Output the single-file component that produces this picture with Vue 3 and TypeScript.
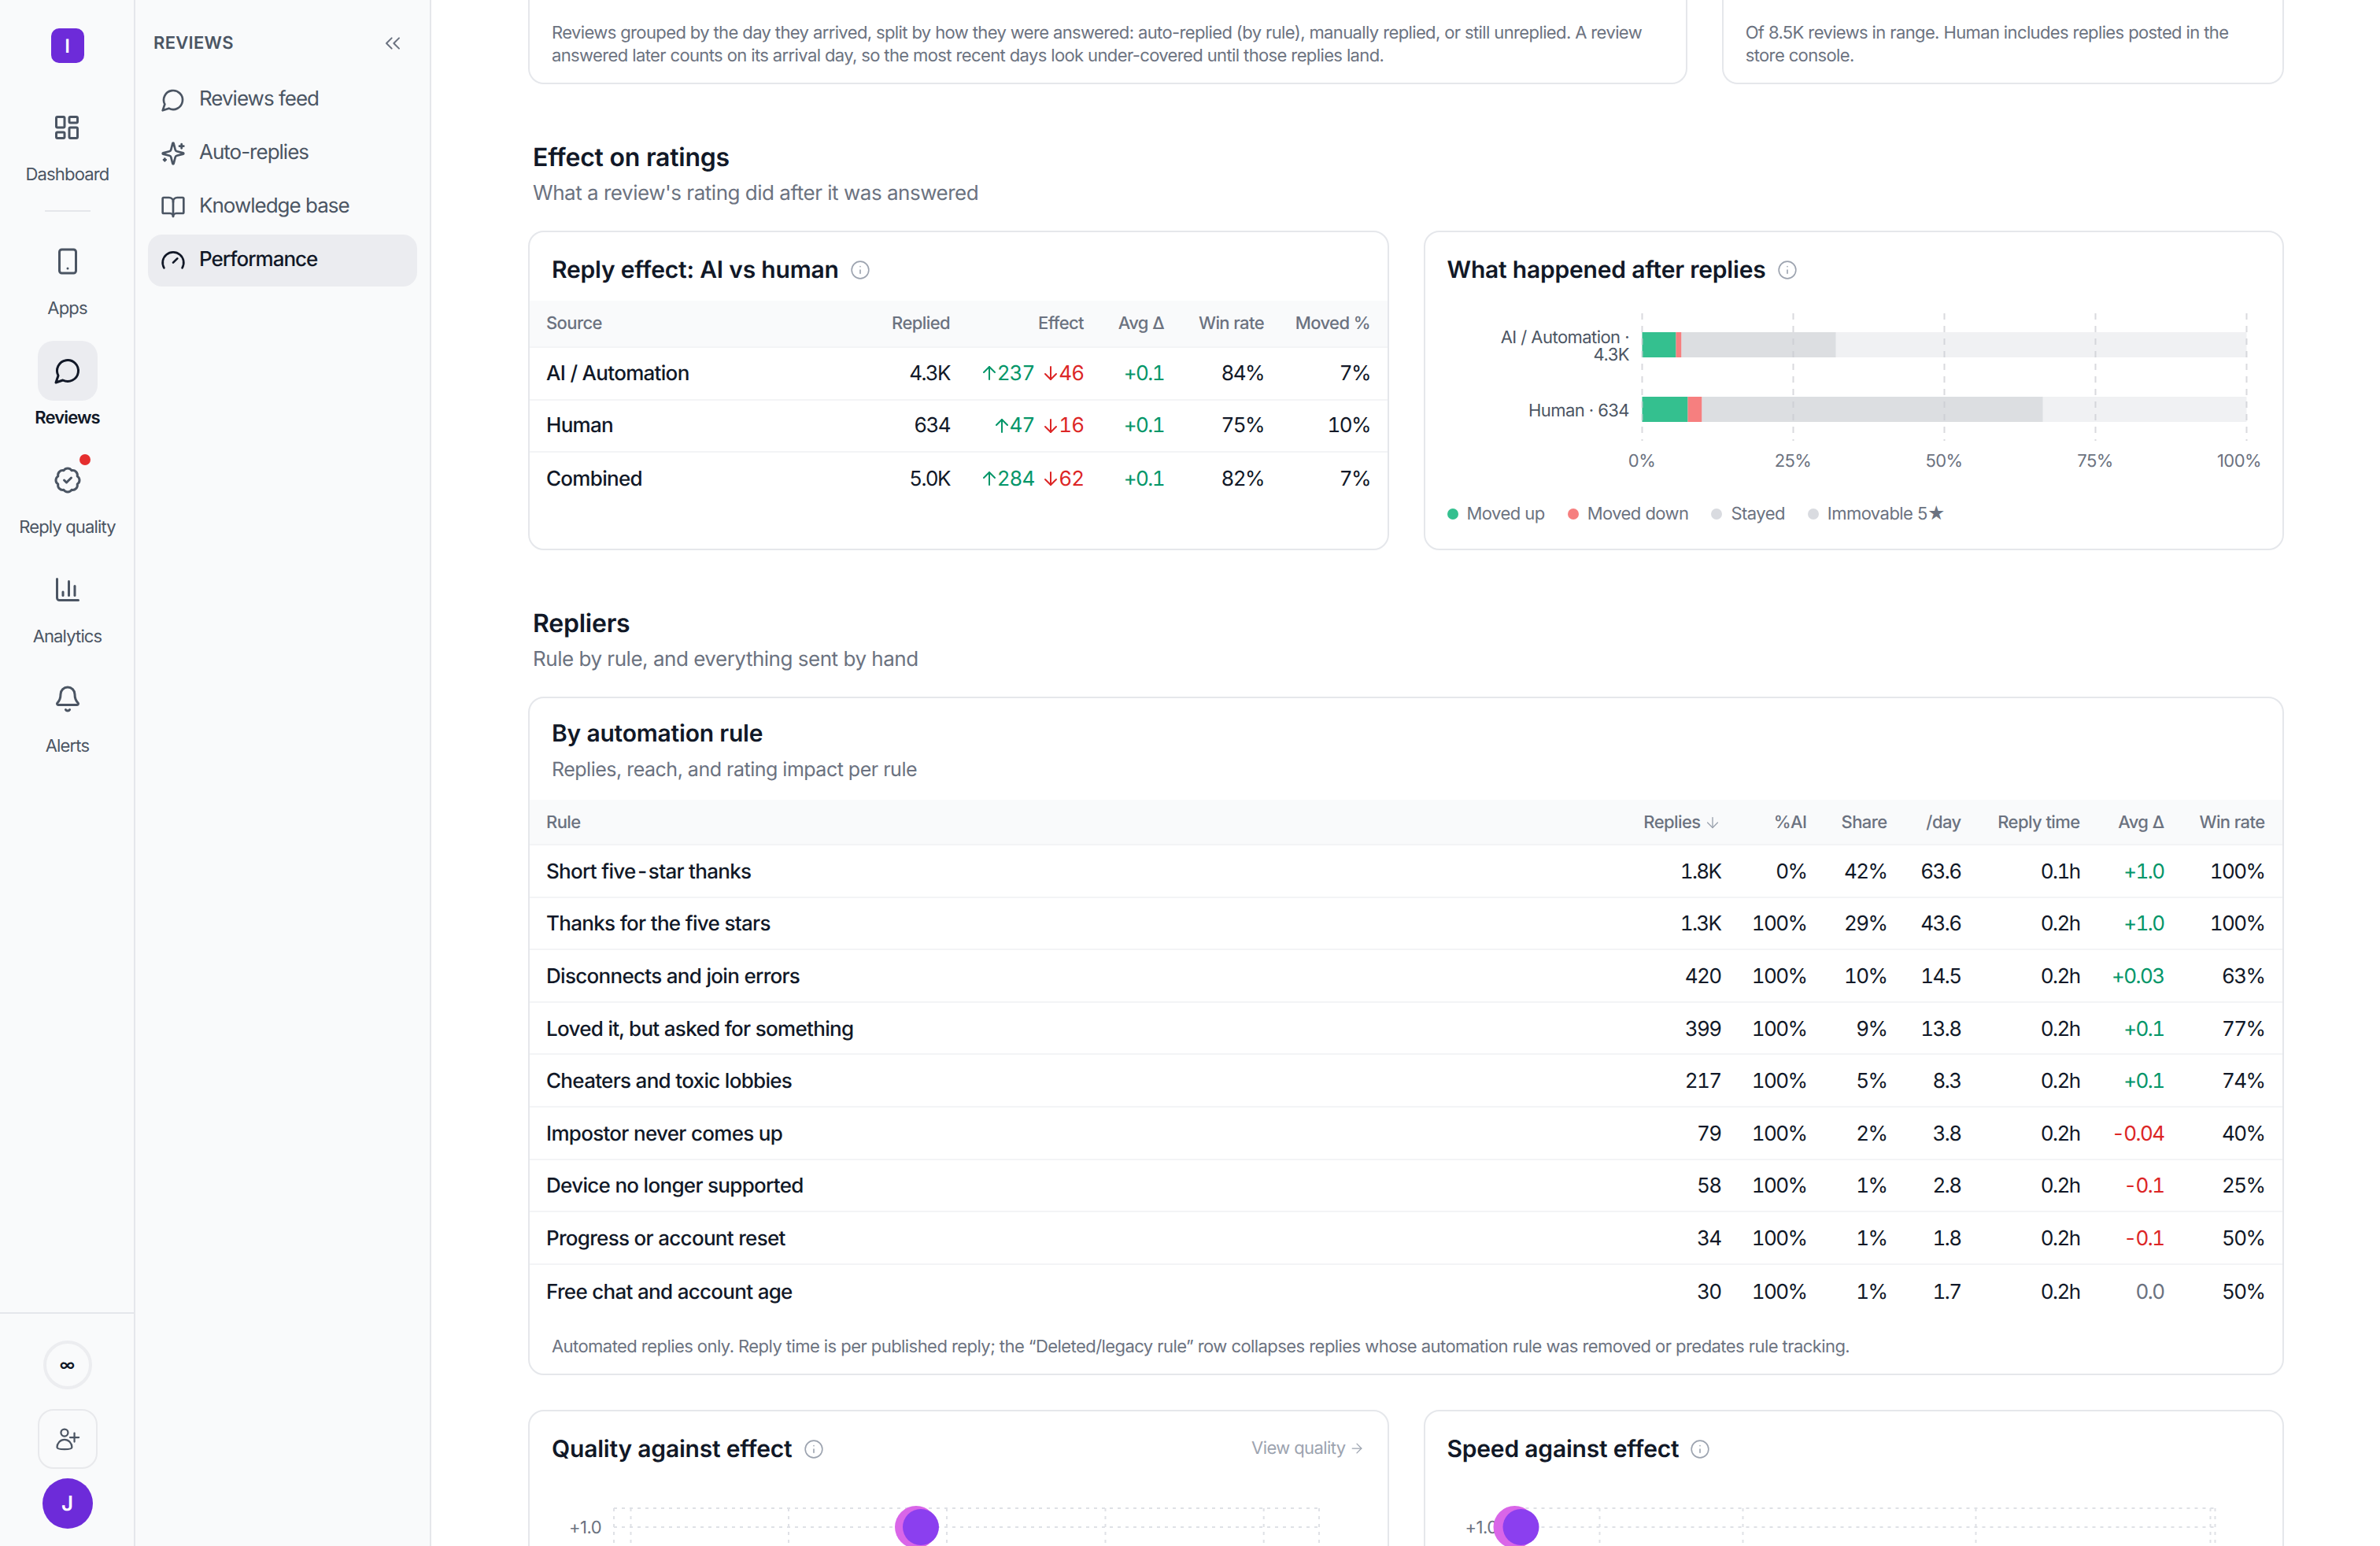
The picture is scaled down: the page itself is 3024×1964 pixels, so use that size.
<script setup lang="ts">
type RailItem = { label: string; icon: string[]; active?: boolean; dot?: boolean };

const i = {
  dashboard: [
    'M4 3h5a1 1 0 0 1 1 1v7a1 1 0 0 1-1 1H4a1 1 0 0 1-1-1V4a1 1 0 0 1 1-1z',
    'M15 3h5a1 1 0 0 1 1 1v3a1 1 0 0 1-1 1h-5a1 1 0 0 1-1-1V4a1 1 0 0 1 1-1z',
    'M15 12h5a1 1 0 0 1 1 1v7a1 1 0 0 1-1 1h-5a1 1 0 0 1-1-1v-7a1 1 0 0 1 1-1z',
    'M4 16h5a1 1 0 0 1 1 1v3a1 1 0 0 1-1 1H4a1 1 0 0 1-1-1v-3a1 1 0 0 1 1-1z',
  ],
  phone: ['M7 2h10a2 2 0 0 1 2 2v16a2 2 0 0 1-2 2H7a2 2 0 0 1-2-2V4a2 2 0 0 1 2-2z', 'M12 18h.01'],
  message: ['M7.9 20A9 9 0 1 0 4 16.1L2 22Z'],
  badge: [
    'M3.85 8.62a4 4 0 0 1 4.78-4.77 4 4 0 0 1 6.74 0 4 4 0 0 1 4.78 4.78 4 4 0 0 1 0 6.74 4 4 0 0 1-4.77 4.78 4 4 0 0 1-6.75 0 4 4 0 0 1-4.78-4.77 4 4 0 0 1 0-6.76Z',
    'm9 12 2 2 4-4',
  ],
  chart: ['M3 3v16a2 2 0 0 0 2 2h16', 'M18 17V9', 'M13 17V5', 'M8 17v-3'],
  bell: [
    'M10.268 21a2 2 0 0 0 3.464 0',
    'M3.262 15.326A1 1 0 0 0 4 17h16a1 1 0 0 0 .74-1.673C19.41 13.956 18 12.499 18 8A6 6 0 0 0 6 8c0 4.499-1.411 5.956-2.738 7.326',
  ],
  sparkles: [
    'M9.937 15.5A2 2 0 0 0 8.5 14.063l-6.135-1.582a.5.5 0 0 1 0-.962L8.5 9.936A2 2 0 0 0 9.937 8.5l1.582-6.135a.5.5 0 0 1 .963 0L14.063 8.5A2 2 0 0 0 15.5 9.937l6.135 1.581a.5.5 0 0 1 0 .964L15.5 14.063a2 2 0 0 0-1.437 1.437l-1.582 6.135a.5.5 0 0 1-.963 0z',
    'M20 3v4',
    'M22 5h-4',
    'M4 17v2',
    'M5 18H3',
  ],
  book: [
    'M12 7v14',
    'M3 18a1 1 0 0 1-1-1V4a1 1 0 0 1 1-1h5a4 4 0 0 1 4 4 4 4 0 0 1 4-4h5a1 1 0 0 1 1 1v13a1 1 0 0 1-1 1h-6a3 3 0 0 0-3 3 3 3 0 0 0-3-3z',
  ],
  gauge: ['m12 14 4-4', 'M3.34 19a10 10 0 1 1 17.32 0'],
  userPlus: [
    'M9.3 3.700a3 3 0 1 1 0 6 3 3 0 0 1 0-6z',
    'M3 19c0-3.500 2.800-6.500 6.300-6.500s6.300 3 6.300 6.500c0 1.200-2.800 1.800-6.300 1.800S3 20.200 3 19z',
    'M17.700 7v7.400',
    'M14 10.700h7.400',
  ],
  info: ['M12 2a10 10 0 1 1 0 20 10 10 0 0 1 0-20z', 'M12 16v-4', 'M12 8h.01'],
}

const rail: RailItem[] = [
  { label: 'Dashboard', icon: i.dashboard },
  { label: 'Apps', icon: i.phone },
  { label: 'Reviews', icon: i.message, active: true },
  { label: 'Reply quality', icon: i.badge, dot: true },
  { label: 'Analytics', icon: i.chart },
  { label: 'Alerts', icon: i.bell },
]

const nav = [
  { label: 'Reviews feed', icon: i.message },
  { label: 'Auto-replies', icon: i.sparkles },
  { label: 'Knowledge base', icon: i.book },
  { label: 'Performance', icon: i.gauge, active: true },
]

const sources = [
  { name: 'AI / Automation', replied: '4.3K', up: 237, down: 46, avg: '+0.1', win: '84%', moved: '7%' },
  { name: 'Human', replied: '634', up: 47, down: 16, avg: '+0.1', win: '75%', moved: '10%' },
  { name: 'Combined', replied: '5.0K', up: 284, down: 62, avg: '+0.1', win: '82%', moved: '7%' },
]

const rules = [
  ['Short five-star thanks', '1.8K', '0%', '42%', '63.6', '0.1h', '+1.0', '100%'],
  ['Thanks for the five stars', '1.3K', '100%', '29%', '43.6', '0.2h', '+1.0', '100%'],
  ['Disconnects and join errors', '420', '100%', '10%', '14.5', '0.2h', '+0.03', '63%'],
  ['Loved it, but asked for something', '399', '100%', '9%', '13.8', '0.2h', '+0.1', '77%'],
  ['Cheaters and toxic lobbies', '217', '100%', '5%', '8.3', '0.2h', '+0.1', '74%'],
  ['Impostor never comes up', '79', '100%', '2%', '3.8', '0.2h', '-0.04', '40%'],
  ['Device no longer supported', '58', '100%', '1%', '2.8', '0.2h', '-0.1', '25%'],
  ['Progress or account reset', '34', '100%', '1%', '1.8', '0.2h', '-0.1', '50%'],
  ['Free chat and account age', '30', '100%', '1%', '1.7', '0.2h', '0.0', '50%'],
]

const ruleHeads = ['%AI', 'Share', '/day', 'Reply time', 'Avg Δ', 'Win rate']

const bars = [
  { y: 40, up: 43, down: 7, stayed: 196 },
  { y: 122, up: 58, down: 18, stayed: 433 },
]
const barGrid = [275.5, 467.5, 659.5, 851.5, 1043.5]
const barTicks = [
  { x: 275, t: '0%' },
  { x: 467, t: '25%' },
  { x: 659, t: '50%' },
  { x: 851, t: '75%' },
  { x: 1034, t: '100%' },
]
const legend = [
  { label: 'Moved up', color: '#34c08f' },
  { label: 'Moved down', color: '#f67f7f' },
  { label: 'Stayed', color: '#d9dbe0' },
  { label: 'Immovable 5★', color: '#d9dbe0' },
]

const scatters = [
  { title: 'Quality against effect', link: true, grid: [107, 128.5, 329, 530, 731.5, 932.7, 1003], pink: 491, purple: 497 },
  { title: 'Speed against effect', link: false, grid: [107.5, 221.5, 403.5, 699.5, 997.5, 1003.5], pink: 113.5, purple: 121.5 },
]

function tone(v: string) {
  if (v.startsWith('+')) return 'pos'
  if (v.startsWith('-')) return 'neg'
  return 'flat'
}
</script>

<template>
  <div class="app">
    <aside class="rail">
      <div class="logo">I</div>
      <div class="rail-list">
        <template v-for="(item, n) in rail" :key="item.label">
          <div class="rail-item" :class="{ active: item.active }">
            <div class="tile">
              <svg class="ic36" viewBox="0 0 24 24"><path v-for="d in item.icon" :key="d" :d="d" /></svg>
              <span v-if="item.dot" class="dot"></span>
            </div>
            <div class="rail-label">{{ item.label }}</div>
          </div>
          <div v-if="n === 0" class="rail-sep"></div>
        </template>
      </div>
      <div class="rail-foot">
        <div class="credits">∞</div>
        <div class="invite">
          <svg class="ic36 thin" viewBox="0 0 24 24"><path v-for="d in i.userPlus" :key="d" :d="d" /></svg>
        </div>
        <div class="avatar">J</div>
      </div>
    </aside>

    <nav class="side">
      <div class="side-head">
        <span>REVIEWS</span>
        <svg class="collapse" viewBox="0 0 24 24"><path d="m11 17-5-5 5-5" /><path d="m18 17-5-5 5-5" /></svg>
      </div>
      <div class="side-list">
        <div v-for="item in nav" :key="item.label" class="side-item" :class="{ active: item.active }">
          <svg class="ic32" viewBox="0 0 24 24"><path v-for="d in item.icon" :key="d" :d="d" /></svg>
          <span>{{ item.label }}</span>
        </div>
      </div>
    </nav>

    <main class="main">
      <div class="top-row">
        <div class="card cut wide">
          Reviews grouped by the day they arrived, split by how they were answered: auto-replied (by rule), manually replied, or still unreplied. A review answered later counts on its arrival day, so the most recent days look under-covered until those replies land.
        </div>
        <div class="card cut">
          Of 8.5K reviews in range. Human includes replies posted in the store console.
        </div>
      </div>

      <section class="section">
        <h2>Effect on ratings</h2>
        <p>What a review's rating did after it was answered</p>
      </section>
      <div class="two">
        <div class="card">
          <div class="card-head">
            <h3>Reply effect: AI vs human</h3>
            <svg class="info" viewBox="0 0 24 24"><path v-for="d in i.info" :key="d" :d="d" /></svg>
          </div>
          <div class="row src head">
            <span>Source</span><span>Replied</span><span>Effect</span><span>Avg Δ</span><span>Win rate</span><span>Moved %</span>
          </div>
          <div v-for="s in sources" :key="s.name" class="row src">
            <span class="name">{{ s.name }}</span>
            <span>{{ s.replied }}</span>
            <span class="effect">
              <span class="pos"><svg class="arrow" viewBox="0 0 24 24"><path d="M12 20V4" /><path d="m5 11 7-7 7 7" /></svg>{{ s.up }}</span>
              <span class="neg"><svg class="arrow" viewBox="0 0 24 24"><path d="M12 4v16" /><path d="m19 13-7 7-7-7" /></svg>{{ s.down }}</span>
            </span>
            <span class="pos">{{ s.avg }}</span>
            <span>{{ s.win }}</span>
            <span>{{ s.moved }}</span>
          </div>
        </div>

        <div class="card">
          <div class="card-head">
            <h3>What happened after replies</h3>
            <svg class="info" viewBox="0 0 24 24"><path v-for="d in i.info" :key="d" :d="d" /></svg>
          </div>
          <svg class="chart" width="1090" height="226" viewBox="0 0 1090 226">
            <g v-for="b in bars" :key="b.y">
              <rect x="275.5" :y="b.y" width="768" height="32" fill="#f0f1f3" />
              <rect x="275.5" :y="b.y" :width="b.up" height="32" fill="#34c08f" />
              <rect :x="275.5 + b.up" :y="b.y" :width="b.down" height="32" fill="#f67f7f" />
              <rect :x="275.5 + b.up + b.down" :y="b.y" :width="b.stayed" height="32" fill="#dcdee1" />
            </g>
            <line v-for="x in barGrid" :key="x" :x1="x" :x2="x" y1="16" y2="178" class="bar-grid" />
            <text x="259" y="54" text-anchor="end" class="bar-label">AI / Automation ·</text>
            <text x="259" y="76" text-anchor="end" class="bar-label">4.3K</text>
            <text x="259" y="147" text-anchor="end" class="bar-label">Human · 634</text>
            <text v-for="t in barTicks" :key="t.t" :x="t.x" y="211" text-anchor="middle" class="tick">{{ t.t }}</text>
          </svg>
          <div class="legend">
            <span v-for="l in legend" :key="l.label" class="legend-item">
              <i :style="{ background: l.color }"></i>{{ l.label }}
            </span>
          </div>
        </div>
      </div>

      <section class="section">
        <h2>Repliers</h2>
        <p>Rule by rule, and everything sent by hand</p>
      </section>
      <div class="card rules">
        <div class="rules-head">
          <h3>By automation rule</h3>
          <p>Replies, reach, and rating impact per rule</p>
        </div>
        <div class="row rule head">
          <span>Rule</span>
          <span class="sorted">Replies<svg class="sort" viewBox="0 0 24 24"><path d="M12 5v14" /><path d="m19 12-7 7-7-7" /></svg></span>
          <span v-for="h in ruleHeads" :key="h">{{ h }}</span>
        </div>
        <div v-for="r in rules" :key="r[0]" class="row rule">
          <span class="name">{{ r[0] }}</span>
          <span>{{ r[1] }}</span>
          <span>{{ r[2] }}</span>
          <span>{{ r[3] }}</span>
          <span>{{ r[4] }}</span>
          <span>{{ r[5] }}</span>
          <span :class="tone(r[6])">{{ r[6] }}</span>
          <span>{{ r[7] }}</span>
        </div>
        <div class="foot-note">
          Automated replies only. Reply time is per published reply; the “Deleted/legacy rule” row collapses replies whose automation rule was removed or predates rule tracking.
        </div>
      </div>

      <div class="two scatter-row">
        <div v-for="c in scatters" :key="c.title" class="card">
          <div class="card-head">
            <h3>{{ c.title }}</h3>
            <svg class="info" viewBox="0 0 24 24"><path v-for="d in i.info" :key="d" :d="d" /></svg>
            <span v-if="c.link" class="view">View quality<svg class="view-arrow" viewBox="0 0 24 24"><path d="M5 12h14" /><path d="m12 5 7 7-7 7" /></svg></span>
          </div>
          <svg class="chart" width="1090" height="260" viewBox="0 0 1090 260">
            <line v-for="x in c.grid" :key="x" :x1="x" :x2="x" y1="36" y2="260" class="scatter-grid" />
            <line :x1="c.grid[0]" :x2="c.grid[c.grid.length - 1]" y1="36" y2="36" class="scatter-grid" />
            <line :x1="c.grid[0]" :x2="c.grid[c.grid.length - 1]" y1="60" y2="60" class="scatter-grid" />
            <text :x="c.grid[0] - 16" y="68" text-anchor="end" class="tick">+1.0</text>
            <circle :cx="c.pink" cy="60" r="27" fill="#d966e8" />
            <circle :cx="c.purple" cy="60" r="23" fill="#8b3fef" />
          </svg>
        </div>
      </div>
    </main>
  </div>
</template>

<style>
html,
body {
  margin: 0;
  height: 100%;
  overflow: hidden;
  background: #fff;
}
</style>

<style scoped>
.app {
  display: flex;
  height: 1964px;
  overflow: hidden;
  font-family: Inter, "Noto Sans", sans-serif;
  text-rendering: geometricPrecision;
  color: #111827;
}
.ic36,
.ic32,
.collapse,
.info,
.arrow,
.sort,
.view-arrow {
  fill: none;
  stroke: currentColor;
  stroke-width: 2;
  stroke-linecap: round;
  stroke-linejoin: round;
  flex: none;
}
.ic36 {
  width: 36px;
  height: 36px;
}
.ic36.thin {
  stroke-width: 1.5;
}
.ic32 {
  width: 32px;
  height: 32px;
}

/* icon rail */
.rail {
  width: 169px;
  flex: none;
  padding-left: 1px;
  box-sizing: content-box;
  border-right: 2px solid #e5e7eb;
  background: #f9fafb;
  display: flex;
  flex-direction: column;
  align-items: center;
}
.logo {
  width: 42px;
  height: 44px;
  margin-top: 36px;
  border-radius: 10px;
  background: #6d2bd9;
  color: #fff;
  font-size: 24px;
  font-weight: 600;
  display: flex;
  align-items: center;
  justify-content: center;
}
.rail-list {
  margin-top: 44px;
  display: flex;
  flex-direction: column;
  align-items: center;
  gap: 25px;
  flex: 1;
}
.rail-item {
  display: flex;
  flex-direction: column;
  align-items: center;
  color: #4b5563;
}
.tile {
  width: 76px;
  height: 76px;
  border-radius: 20px;
  display: flex;
  align-items: center;
  justify-content: center;
  position: relative;
}
.rail-item.active .tile {
  background: #ebecf0;
}
.rail-item.active {
  color: #111827;
}
.rail-item.active .rail-label {
  font-weight: 600;
}
.rail-label {
  margin-top: 6px;
  font-size: 22px;
  line-height: 32px;
  letter-spacing: -0.85px;
  white-space: nowrap;
}
.rail-sep {
  width: 58px;
  height: 2px;
  background: #e5e7eb;
  margin: 4px 0 0;
}
.dot {
  position: absolute;
  top: 5px;
  right: 9px;
  width: 14px;
  height: 14px;
  border-radius: 50%;
  background: #e52e2e;
}
.rail-foot {
  align-self: stretch;
  margin-left: -1px;
  border-top: 2px solid #e5e7eb;
  height: 297px;
  box-sizing: border-box;
  padding-top: 34px;
  padding-left: 1px;
  display: flex;
  flex-direction: column;
  align-items: center;
}
.credits {
  width: 62px;
  height: 62px;
  box-sizing: border-box;
  border: 4px solid #ecedf0;
  border-radius: 50%;
  font-size: 20px;
  font-weight: 600;
  display: flex;
  align-items: center;
  justify-content: center;
}
.invite {
  width: 76px;
  height: 76px;
  margin-top: 25px;
  box-sizing: border-box;
  border: 2px solid #e8e9ec;
  border-radius: 20px;
  color: #4b5563;
  display: flex;
  align-items: center;
  justify-content: center;
}
.avatar {
  width: 64px;
  height: 64px;
  margin-top: 12px;
  border-radius: 50%;
  background: #6d2bd9;
  color: #fff;
  font-size: 26px;
  font-weight: 600;
  display: flex;
  align-items: center;
  justify-content: center;
}

/* section sidebar */
.side {
  width: 374px;
  flex: none;
  border-right: 2px solid #e5e7eb;
  background: #f9fafb;
}
.side-head {
  height: 110px;
  box-sizing: border-box;
  padding: 0 31px 0 23px;
  display: flex;
  align-items: center;
  justify-content: space-between;
  font-size: 22px;
  font-weight: 600;
  letter-spacing: 0.3px;
  color: #4b5563;
}
.collapse {
  width: 32px;
  height: 32px;
  stroke-width: 1.5;
  color: #6b7280;
}
.side-list {
  padding: 0 16px;
  margin-top: -16px;
  display: flex;
  flex-direction: column;
  gap: 2px;
}
.side-item {
  height: 66px;
  padding-left: 16px;
  border-radius: 18px;
  display: flex;
  align-items: center;
  gap: 17px;
  font-size: 26px;
  letter-spacing: -1px;
  color: #4b5563;
}
.side-item span {
  margin-bottom: 4px;
}
.side-item.active {
  background: #ebecf0;
  color: #111827;
  font-weight: 500;
}

/* content */
.main {
  flex: 1;
  min-width: 0;
  height: 1964px;
  overflow: hidden;
  padding: 0 122px 0 123px;
  box-sizing: border-box;
}
.card {
  box-sizing: border-box;
  border: 2px solid #e5e7eb;
  border-radius: 20px;
  background: #fff;
  min-width: 0;
}
.top-row {
  display: grid;
  grid-template-columns: 1fr 1fr 1fr;
  gap: 44px;
  height: 107px;
}
.cut {
  border-top: none;
  border-radius: 0 0 20px 20px;
  padding: 28px 28px 0;
  font-size: 22px;
  line-height: 29px;
  letter-spacing: -0.62px;
  color: #6b7280;
}
.cut.wide {
  grid-column: span 2;
}
.section {
  margin-top: 71px;
  padding-left: 6px;
}
.section h2 {
  margin: 0;
  font-size: 32px;
  line-height: 44px;
  font-weight: 600;
  letter-spacing: -0.23px;
}
.section p {
  margin: 2px 0 0;
  font-size: 26px;
  line-height: 44px;
  letter-spacing: -0.48px;
  color: #6b7280;
}
.two {
  margin-top: 25px;
  display: grid;
  grid-template-columns: 1fr 1fr;
  gap: 44px;
}
.card-head {
  height: 87px;
  padding: 0 28px;
  display: flex;
  align-items: center;
  gap: 14px;
}
.card-head h3 {
  margin: 8px 0 0;
  font-size: 30px;
  font-weight: 600;
  letter-spacing: -0.2px;
}
.info {
  width: 26px;
  height: 26px;
  margin-top: 8px;
  stroke-width: 1.5;
  color: #9ca3af;
}
.row {
  display: grid;
  align-items: center;
  height: 66.6px;
  box-sizing: border-box;
  border-bottom: 2px solid #f3f4f6;
  font-size: 26px;
  letter-spacing: -1.6px;
  text-align: right;
  font-variant-numeric: tabular-nums;
}
.row.rule {
  padding-top: 2px;
}
.rule:nth-last-child(2),
.src:last-child {
  border-bottom: none;
}
.row > span {
  padding-right: 22.5px;
  white-space: nowrap;
}
.row > span:first-child {
  padding-left: 21px;
  text-align: left;
}
.row.src > span:last-child {
  padding-right: 21.5px;
}
.row.head {
  height: 60px;
  background: #f9fafb;
  font-size: 22px;
  font-weight: 500;
  letter-spacing: -0.6px;
  color: #6b7280;
}
.row.rule.head {
  height: 58px;
}
.src {
  grid-template-columns: 1fr 130px 170px 102px 127px 134px;
}
.rule {
  grid-template-columns: 1fr 160px 109px 102px 94px 151px 107px 128px;
}
.row .name {
  font-weight: 500;
  letter-spacing: -0.7px;
}
.pos {
  color: #059669;
}
.neg {
  color: #dc2626;
}
.flat {
  color: #6b7280;
}
.effect {
  display: flex;
  justify-content: flex-end;
  gap: 9px;
  letter-spacing: -1px;
}
.effect > span {
  display: inline-flex;
  align-items: center;
}
.arrow {
  width: 24px;
  height: 24px;
  margin-right: -2px;
}
.chart {
  display: block;
}
.bar-grid {
  stroke: #c9cbd1;
  stroke-width: 2;
  stroke-dasharray: 8 8;
  opacity: 0.7;
}
.bar-label,
.tick {
  font-size: 22px;
  letter-spacing: -0.55px;
  fill: #4b5563;
}
.tick {
  fill: #6b7280;
}
.legend {
  margin-top: 29px;
  padding-left: 28px;
  padding-bottom: 28px;
  display: flex;
  gap: 29px;
  font-size: 22px;
  line-height: 32px;
  letter-spacing: -0.55px;
  color: #6b7280;
}
.legend-item {
  display: inline-flex;
  align-items: center;
  gap: 11px;
}
.legend-item i {
  width: 14px;
  height: 14px;
  border-radius: 50%;
}
.rules {
  margin-top: 25px;
}
.rules-head {
  height: 129px;
  padding: 23px 28px 0;
  box-sizing: border-box;
}
.rules-head h3 {
  margin: 0;
  font-size: 30px;
  line-height: 44px;
  font-weight: 600;
  letter-spacing: -0.2px;
}
.rules-head p {
  margin: 2px 0 0;
  font-size: 25px;
  line-height: 44px;
  letter-spacing: -0.5px;
  color: #6b7280;
}
.sorted {
  display: inline-flex;
  justify-content: flex-end;
  align-items: center;
  gap: 4px;
}
.sort {
  width: 22px;
  height: 22px;
  stroke-width: 1.5;
  color: #9ca3af;
}
.foot-note {
  height: 72px;
  padding: 20px 28px 0;
  box-sizing: border-box;
  font-size: 22px;
  line-height: 36px;
  letter-spacing: -0.56px;
  color: #6b7280;
}
.scatter-row {
  margin-top: 44px;
}
.view {
  margin: 0 0 0 auto;
  display: inline-flex;
  align-items: center;
  gap: 4px;
  font-size: 22px;
  letter-spacing: -0.6px;
  color: #9ca3af;
  padding-top: 6px;
  padding-right: 1px;
}
.view-arrow {
  width: 20px;
  height: 20px;
  stroke-width: 1.5;
}
.scatter-grid {
  stroke: #dfe1e6;
  stroke-width: 2;
  stroke-dasharray: 4 6;
}
</style>
